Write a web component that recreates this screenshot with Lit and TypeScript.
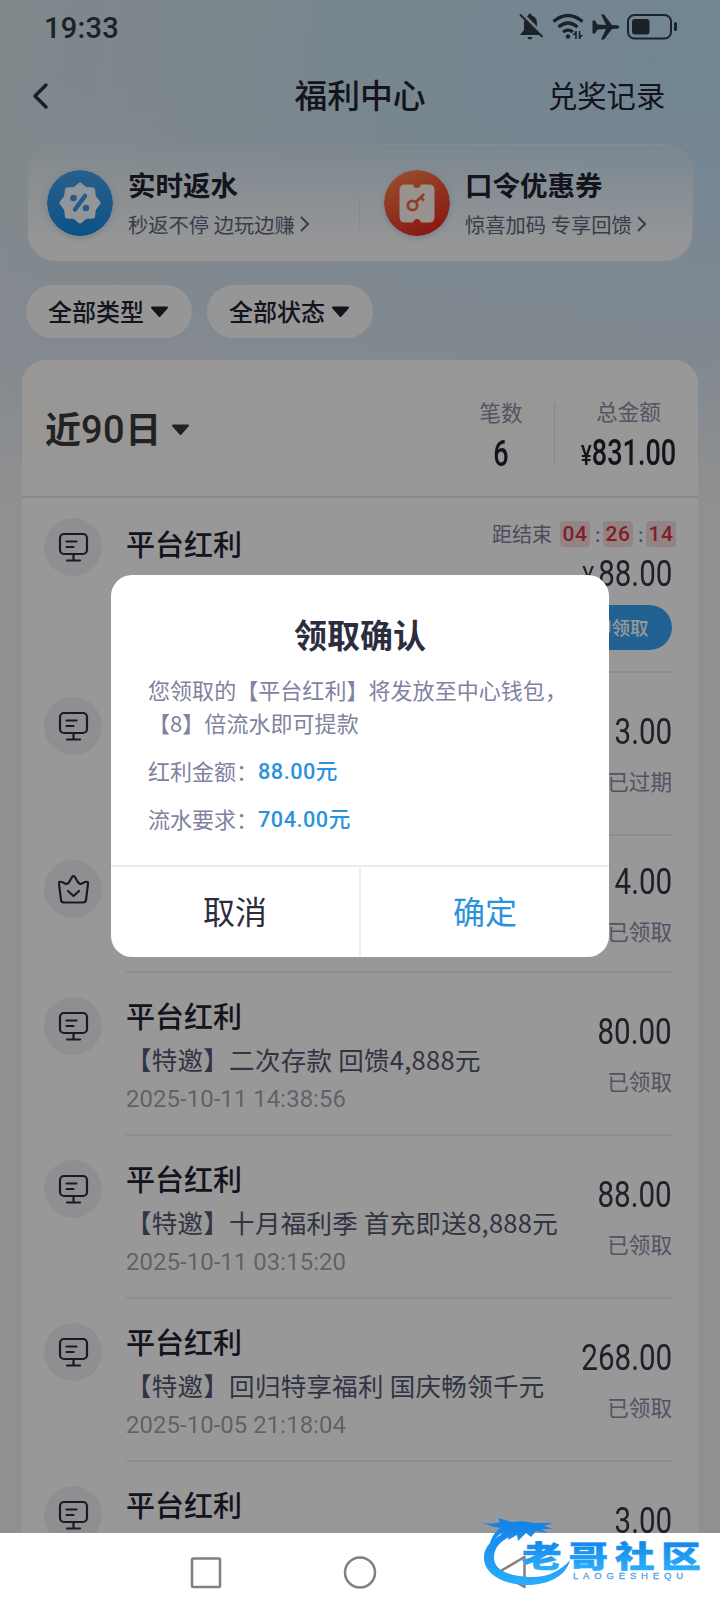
import { LitElement, html, css, svg, nothing } from "lit";
import { customElement, property } from "lit/decorators.js";

const monitorIcon = svg`<rect x="2" y="2" width="27" height="20" rx="4"/><path d="M8.500 9.500h10M8.500 15h7M15.500 22v6.500M9 28.500h13"/>`;
const crownIcon = svg`<path d="M3 26L1 10Q0.500 7 4 8l3.500 1.700q2 .8 3.200-1l3.400-5.700q1.400-1.800 2.800 0l3.400 5.700q1.200 1.800 3.200 1L27 8q3.500-1 3 2l-2 16q-.2 2.500-3 2.500H6Q3.200 28.500 3 26z"/><path d="M10 17l5.500 5 5.500-5"/>`;

interface Bonus {
  size: string;
  icon: "monitor" | "crown";
  title: string;
  note?: string;
  date?: string;
  amount: string;
  status: string;
}

const bonuses: Bonus[] = [
  { size: "first", icon: "monitor", title: "平台红利", amount: "88.00", status: "" },
  { size: "", icon: "monitor", title: "", amount: "3.00", status: "已过期" },
  { size: "short", icon: "crown", title: "", amount: "4.00", status: "已领取" },
  { size: "", icon: "monitor", title: "平台红利", note: "【特邀】二次存款 回馈4,888元", date: "2025-10-11 14:38:56", amount: "80.00", status: "已领取" },
  { size: "", icon: "monitor", title: "平台红利", note: "【特邀】十月福利季 首充即送8,888元", date: "2025-10-11 03:15:20", amount: "88.00", status: "已领取" },
  { size: "", icon: "monitor", title: "平台红利", note: "【特邀】回归特享福利 国庆畅领千元", date: "2025-10-05 21:18:04", amount: "268.00", status: "已领取" },
  { size: "", icon: "monitor", title: "平台红利", amount: "3.00", status: "" },
];

@customElement("bonus-row")
class BonusRow extends LitElement {
  @property({ attribute: false }) item!: Bonus;
  static styles = css`
    :host { display: block; }
    .row { box-sizing: border-box; display: flex; height: 163px; padding: 24px 26px 0 22px; }
    .row.first { height: 175px; padding-top: 20px; }
    .row.short { height: 137px; }
    .badge { flex: none; width: 58px; height: 58px; margin-right: 24px; border-radius: 50%; background: #efeff2; display: grid; place-items: center; }
    .badge svg { width: 31px; height: 31px; fill: none; stroke: #2b2d3d; stroke-width: 2.200; stroke-linecap: round; stroke-linejoin: round; }
    .main { flex: 1; min-width: 0; display: flex; justify-content: space-between; border-bottom: 2px solid #ebebee; }
    .left, .right { white-space: nowrap; }
    .left { flex: 1; min-width: 0; margin-top: -2px; }
    .right { flex: none; display: flex; flex-direction: column; align-items: flex-end; }
    .title { height: 40px; font-size: 29px; font-weight: 500; line-height: 40px; color: #20222f; }
    .first .title { margin-top: 7px; }
    .note { height: 40px; font-size: 25.500px; line-height: 36px; margin-top: 6px; color: #545770; letter-spacing: .28px; }
    .date { font-family: Roboto, sans-serif; font-size: 23px; line-height: 36px; margin-top: 1px; color: #a2a3af; transform: scaleX(1.045); transform-origin: 0 50%; }
    .amount { font-family: Roboto, sans-serif; font-size: 36.500px; line-height: 40px; margin-top: 15px; color: #343645; transform: scaleX(.81); transform-origin: 100% 50%; }
    .status { font-size: 21.600px; line-height: 30px; margin-top: 14px; color: #8a8ca3; }
    .short .amount { margin-top: 2px; }
    .first .amount { margin-top: 7px; }
    .yen { font-size: 28px; margin-right: 5px; }
    .timer { display: flex; align-items: center; gap: 5px; height: 26px; margin: 3px -4px 0 0; font-size: 20px; color: #7c7f9b; }
    .timer b { font: 500 21px/26px Roboto, sans-serif; width: 30px; text-align: center; color: #d8353e; background: #f3dcde; border-radius: 4px; letter-spacing: .5px; }
    .timer i { font-style: normal; width: 3px; text-align: center; line-height: 20px; }
    .timer span { margin: -2px 3px 0 0; }
    .claim { box-sizing: border-box; margin-top: 8px; width: 121px; height: 45px; border-radius: 23px; background: #38a4f3; color: #fff; font-size: 18.500px; line-height: 44px; text-align: center; font-weight: 500; }
  `;
  render() {
    const b = this.item;
    const first = b.size === "first";
    return html`<div class="row ${b.size}">
      <div class="badge"><svg viewBox="0 0 31 31">${b.icon === "crown" ? crownIcon : monitorIcon}</svg></div>
      <div class="main">
        <div class="left">
          ${b.title ? html`<div class="title">${b.title}</div>` : nothing}
          ${b.note ? html`<div class="note">${b.note}</div><div class="date">${b.date}</div>` : nothing}
        </div>
        <div class="right">
          ${first ? html`<div class="timer"><span>距结束</span><b>04</b><i>:</i><b>26</b><i>:</i><b>14</b></div>` : nothing}
          <div class="amount">${first ? html`<span class="yen">¥</span>` : nothing}${b.amount}</div>
          ${first ? html`<div class="claim">立即领取</div>` : html`<div class="status">${b.status}</div>`}
        </div>
      </div>
    </div>`;
  }
}

@customElement("claim-dialog")
class ClaimDialog extends LitElement {
  static styles = css`
    :host { display: block; }
    .box { box-sizing: border-box; width: 498px; height: 382px; border-radius: 21px; background: #fff; overflow: hidden; display: flex; flex-direction: column; }
    h2 { margin: 37px 0 0; text-align: center; font-size: 33px; line-height: 44px; font-weight: 700; color: #2c2e3f; }
    .body { flex: 1; padding: 17px 0 0 37px; font-size: 22px; line-height: 33px; color: #7f82a0; white-space: nowrap; }
    p { margin: 0; letter-spacing: .05px; }
    .line { margin-top: 15px; display: flex; align-items: center; height: 33px; }
    .line b { font-weight: 500; font-size: 21.700px; font-family: Roboto, "Noto Sans CJK SC", sans-serif; color: #2b93dc; margin-top: 1px; letter-spacing: .5px; }
    .buttons { display: flex; height: 92px; border-top: 2px solid #ebebee; box-sizing: border-box; }
    .buttons div { flex: 1; text-align: center; font-size: 32px; line-height: 87px; color: #2c2e3f; }
    .buttons .ok { color: #2b93dc; border-left: 2px solid #ebebee; }
  `;
  render() {
    return html`<div class="box">
      <h2>领取确认</h2>
      <div class="body">
        <p>您领取的【平台红利】将发放至中心钱包，</p>
        <p>【8】倍流水即可提款</p>
        <div class="line">红利金额：<b>88.00元</b></div>
        <div class="line">流水要求：<b>704.00元</b></div>
      </div>
      <div class="buttons"><div>取消</div><div class="ok">确定</div></div>
    </div>`;
  }
}

@customElement("app-root")
class AppRoot extends LitElement {
  static styles = css`
    :host { display: block; font-family: "Noto Sans CJK SC", sans-serif; color: #20222f; }
    .screen { position: relative; width: 720px; height: 1612px; overflow: hidden; display: flex; flex-direction: column; white-space: nowrap; }
    .page { flex: none; height: 1533px; overflow: hidden; background: linear-gradient(180deg, rgba(222,228,238,0) 80px, rgba(222,230,240,.8) 360px, #f0f0f1 500px), linear-gradient(97deg, #d6e4e9 0, #c6dfee 45%, #b8defa 100%); }
    .statusbar { height: 54px; display: flex; justify-content: space-between; padding: 0 41px 0 44px; align-items: center; }
    .clock { font: 500 29px/54px Roboto, sans-serif; color: #2e3b45; letter-spacing: .3px; padding-top: 1px; }
    .sys { width: 162px; height: 28px; }
    .topbar { display: grid; grid-template-columns: 190px 1fr 190px; height: 84px; margin-bottom: 6px; align-items: center; }
    .topbar svg { width: 18px; height: 28px; margin-left: 31px; }
    .topbar h1 { margin: -4px 0 0; font-size: 32.800px; line-height: 80px; font-weight: 500; text-align: center; }
    .topbar .log { font-size: 29.300px; line-height: 80px; margin-top: -4px; padding-left: 18px; }
    .promo { box-sizing: border-box; height: 119px; margin: 0 26px; border: 2px solid #dbe7ef; border-radius: 30px; background: linear-gradient(180deg, rgba(255,255,255,.06), rgba(252,252,253,.96) 88%); display: flex; padding: 24px 19px 0; }
    .offer { flex: none; width: 313px; display: flex; gap: 15px; }
    .offer + .sep + .offer { padding-left: 24px; }
    .offer svg.ic { width: 66px; height: 66px; flex: none; border-radius: 50%; filter: drop-shadow(0 2px 3px rgba(60,120,180,.25)); }
    .offer h3 { margin: -1px 0 0; font-size: 27.500px; line-height: 30px; font-weight: 700; }
    .offer p { margin: 12px 0 0; font-size: 20.300px; line-height: 26px; color: #60647c; display: flex; align-items: center; gap: 4px; }
    .sep { flex: none; width: 1px; height: 56px; background: linear-gradient(rgba(210,220,230,0), #d8dfe8 50%, rgba(215,222,230,0)); margin: 14px 0 0 -1px; }
    .filters { display: flex; gap: 15px; margin: 22px 26px; height: 53px; }
    .pill { width: 166px; border-radius: 27px; background: #fafafb; box-sizing: border-box; padding-left: 22px; display: flex; align-items: center; font-size: 24px; font-weight: 500; gap: 6px; line-height: 53px; }
    .pill span { margin-top: -3px; }
    .tri { width: 19px; height: 12px; fill: #20222f; stroke: #20222f; stroke-linejoin: round; }
    .panel { width: 676px; margin-left: 22px; background: #fdfdfe; border-radius: 24px 24px 0 0; height: 1173px; overflow: hidden; }
    .summary { box-sizing: border-box; height: 138px; border-bottom: 2px solid #e6e6ea; background: linear-gradient(120deg, #fffcf8, #fefcf9 60%, #fdfdfe); display: flex; align-items: center; padding: 0 23px 0 23px; }
    .range { font-size: 36px; line-height: 50px; font-weight: 700; display: flex; align-items: center; gap: 10px; color: #3a3a3d; flex: 1; }
    .range b { font: 500 38px/50px Roboto, sans-serif; letter-spacing: .5px; }
    .range .tri { fill: #3a3a3d; stroke: #3a3a3d; margin-top: 3px; }
    .stat { text-align: center; font-size: 21.500px; line-height: 28px; color: #8a8ca3; padding-top: 16px; }
    .stat b { display: block; font: 500 36.500px/40px Roboto, sans-serif; color: #20222f; margin-top: 8px; transform: scaleX(.74); }
    .stat small { font-size: 28px; }
    .count { width: 66px; }
    .bar { width: 1px; height: 60px; background: #e2e2e8; margin: 10px 0 0 20px; }
    .total { width: 91px; margin: 0 1px 0 28px; }
    .total b { margin-left: -20px; margin-right: -20px; }
    .mask { position: absolute; left: 0; top: 0; width: 720px; height: 1533px; background: rgba(0,0,0,.4); }
    .dialog { position: absolute; left: 111px; top: 575px; }
    .nav { flex: 1; background: #fff; }
    .nav svg { display: block; }
    .mark { position: absolute; left: 480px; top: 1515px; }
  `;
  render() {
    const tri = html`<svg class="tri" viewBox="0 0 19 12"><path stroke-width="2" d="M2 1.500h15L9.500 10z"/></svg>`;
    const arrow = html`<svg width="11" height="18" viewBox="0 0 11 18"><path d="M2 2l7 7-7 7" fill="none" stroke="#60647c" stroke-width="2"/></svg>`;
    return html`<div class="screen">
      <div class="page">
        <div class="statusbar">
          <span class="clock">19:33</span>
          <svg class="sys" viewBox="0 0 162 28" fill="#2e3b45" stroke="#2e3b45">
            <g stroke="none"><path d="M13 0.500q1.500 0 1.800 2Q20 4 20 10v7l3 5H3l4-5v-7q0-6 4.200-7.500.3-2 1.800-2zM10.500 24h5q-.5 2.500-2.500 2.500T10.500 24z"/></g>
            <path d="M4 0L26 22.500" stroke="#bcd9ea" stroke-width="4"/><path d="M3 1.500L25.500 24" stroke-width="1.800"/>
            <g fill="none" stroke-width="3.200"><path d="M36.500 8.500q14.500-12 29 0M41.500 14q9.500-8 19 0M46 19q5-3.800 10 0"/></g>
            <circle cx="51" cy="23.500" r="2.200" stroke="none"/><path d="M59 18v8M62.500 18v8" stroke-width="1.600"/><path stroke="none" d="M59 18l-3.500 4H59zM62.500 26l3.500-4h-3.500z"/>
            <path stroke="none" d="M75.500 7.500H78l2.500 4 8.500.5L84 1.500h3L95 12l5 .3q2.500.3 2.500 1.700t-2.500 1.700L95 16l-8 10.500h-3L89 16l-8.500.5-2.500 4h-2.500z"/>
            <rect x="111" y="2" width="43" height="23.500" rx="6.500" fill="none" stroke-width="2"/><rect x="115" y="6" width="17.500" height="15.500" rx="3" stroke="none"/><rect x="157" y="9" width="3" height="9" rx="1.500" stroke="none"/>
          </svg>
        </div>
        <div class="topbar">
          <svg viewBox="0 0 18 28"><path d="M15 3L4 14l11 11" fill="none" stroke="#303542" stroke-width="3.500" stroke-linecap="round" stroke-linejoin="round"/></svg>
          <h1>福利中心</h1><span class="log">兑奖记录</span>
        </div>
        <div class="promo">
          <div class="offer">
            <svg class="ic" viewBox="0 0 66 66"><defs><linearGradient id="b" x2="0" y2="1"><stop stop-color="#479fe8"/><stop offset="1" stop-color="#1488e2"/></linearGradient></defs><circle cx="33" cy="33" r="33" fill="url(#b)"/>
              <path fill="#f5faff" stroke="#f5faff" stroke-width="4" stroke-linejoin="round" d="M33 14.500l5.500 4.500 7.500.5 1 7.500 4.500 6-4.500 6-1 7.500-7.500.5-5.500 4.500-5.500-4.500-7.500-.5-1-7.500-4.500-6 4.500-6 1-7.500 7.500-.5z"/><path d="M38 26L28 39.500" stroke="#3a9aea" stroke-width="4.500" stroke-linecap="round"/><circle cx="26.500" cy="28" r="3.300" fill="#3a9aea"/><circle cx="39" cy="38" r="3.300" fill="#3a9aea"/></svg>
            <div><h3>实时返水</h3><p>秒返不停 边玩边赚${arrow}</p></div>
          </div>
          <div class="sep"></div>
          <div class="offer">
            <svg class="ic" viewBox="0 0 66 66"><defs><linearGradient id="r" x2=".5" y2="1"><stop stop-color="#ff8a50"/><stop offset="1" stop-color="#e62e22"/></linearGradient></defs><circle cx="33" cy="33" r="33" fill="url(#r)"/>
              <path fill="#fff6f0" d="M21 14.500h8q1 3.500 4 3.500t4-3.500h8q5.500 0 5.500 5.500v27q0 5.500-5.500 5.500h-8Q36 49 33 49t-4 3.500h-8q-5.500 0-5.500-5.500V20q0-5.500 5.500-5.500z"/><circle cx="28.500" cy="35.500" r="4.700" fill="none" stroke="#ec6a4a" stroke-width="2.800"/><path d="M32 32l8-8M36.500 27.500l3.500 3" stroke="#ec6a4a" stroke-width="2.800"/></svg>
            <div><h3>口令优惠券</h3><p>惊喜加码 专享回馈${arrow}</p></div>
          </div>
        </div>
        <div class="filters"><div class="pill"><span>全部类型</span>${tri}</div><div class="pill"><span>全部状态</span>${tri}</div></div>
        <div class="panel">
          <div class="summary">
            <div class="range"><span>近<b>90</b>日</span>${tri}</div>
            <div class="stat count">笔数<b>6</b></div><div class="bar"></div>
            <div class="stat total">总金额<b><small>¥</small>831.00</b></div>
          </div>
          ${bonuses.map((b) => html`<bonus-row .item=${b}></bonus-row>`)}
        </div>
      </div>
      <div class="nav"><svg width="720" height="79" fill="none" stroke="#808080" stroke-width="2.500"><rect x="192" y="25.500" width="28" height="28.500" rx="1"/><circle cx="360" cy="39.500" r="15"/><path d="M524.500 24v30L499 39z" stroke-linejoin="round"/></svg></div>
      <div class="mask"></div>
      <claim-dialog class="dialog"></claim-dialog>
      <svg class="mark" width="226" height="80">
        <defs>
          <linearGradient id="w" gradientUnits="userSpaceOnUse" x1="0" y1="10" x2="0" y2="70"><stop stop-color="#1583e8"/><stop offset="1" stop-color="#2aaefc"/></linearGradient>
          <linearGradient id="t" gradientUnits="userSpaceOnUse" x1="0" y1="-27" x2="0" y2="3"><stop stop-color="#1583e8"/><stop offset="1" stop-color="#2aaefc"/></linearGradient>
        </defs>
        <g fill="url(#w)">
          <path d="M36 16C18 18 4 29 4 43c0 16 20 27 43 27 22 0 39-9 43-25-10 12-25 18-41 17C29 61 14 55 14 43c0-10 6-18 22-24z"/>
          <path d="M2 7q8 3 18 0l-2-4 14 4q12-2 21 1l7 0 13 0-9 3 9 3-11 0 5 4-11-2-5 6-5-4-8 8-1-6-9 5 1-6-11 5 4-6Q17 20 9 32q2-12 11-19-9-1-18-6z"/>
          <text transform="translate(42 52) scale(1.320 1)" font-family="Noto Sans CJK SC" font-size="30" font-weight="900" letter-spacing="5.200" fill="url(#t)" stroke="url(#t)" stroke-width=".5">老哥社区</text>
          <text x="93" y="63.500" font-family="Liberation Sans" font-size="9.500" textLength="110" fill="#4f9fe8" stroke="#4f9fe8" stroke-width=".3">LAOGESHEQU</text>
        </g>
      </svg>
    </div>`;
  }
}
